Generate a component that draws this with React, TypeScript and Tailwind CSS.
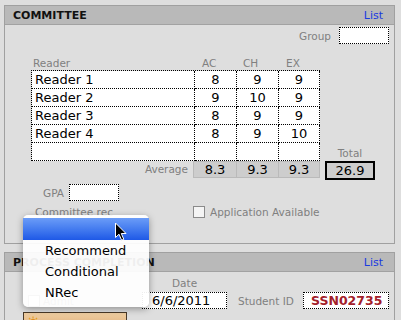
const rows = [
  ["Reader 1", "8", "9", "9"],
  ["Reader 2", "9", "10", "9"],
  ["Reader 3", "8", "9", "9"],
  ["Reader 4", "8", "9", "10"],
  ["", "", "", ""],
];

function Header({ title }: { title: string }) {
  return (
    <div className="h-[19px] bg-[#b9b9b9] border-b border-[#a2a2a2] flex items-center justify-between pl-[8px] pr-[11px]">
      <span className="text-[11px] font-bold text-[#111] leading-none">{title}</span>
      <span className="text-[11px] text-[#1a3be0] leading-none">List</span>
    </div>
  );
}

export default function App() {
  return (
    <div className="relative w-[401px] h-[320px] overflow-hidden bg-[#dedede] pt-[5px] pl-[4px] font-['DejaVu_Sans',Verdana,sans-serif] text-black">
      {/* Panel 1 */}
      <div className="w-[391px] h-[239px] border border-[#a0a0a0]">
        <Header title="COMMITTEE" />
        <div className="pt-[2px]">
          <div className="flex justify-end items-center gap-[8px] pr-[5px]">
            <span className="text-[10.5px] text-[#808080] leading-[14px]">Group</span>
            <div className="w-[50px] h-[17px] bg-white border border-dotted border-black" />
          </div>

          <div className="ml-[26px] mt-[12px] grid grid-cols-[164px_42px_42px_41px] h-[14px] text-[10.5px] leading-[14px] text-[#808080]">
            <span className="pl-[2px]">Reader</span>
            <span className="pl-[7px]">AC</span>
            <span className="pl-[6px]">CH</span>
            <span className="pl-[7px]">EX</span>
          </div>

          <div className="ml-[26px] flex">
            <div className="grid grid-cols-[163px_42px_42px_41px] border-l border-t border-dotted border-black w-[289px]">
              {rows.map((r, i) =>
                r.map((c, j) => (
                  <div
                    key={`${i}-${j}`}
                    className={`h-[18px] bg-white border-r border-b border-dotted border-black text-[13px] leading-[17px] ${
                      j === 0 ? "pl-[3px]" : "text-center"
                    }`}
                  >
                    {c}
                  </div>
                ))
              )}
            </div>
            <div className="ml-[5px] w-[50px] flex items-end justify-center">
              <span className="text-[10.5px] leading-[14px] text-[#808080] pb-[1px]">Total</span>
            </div>
          </div>

          <div className="ml-[26px] flex items-start">
            <div className="w-[162px] h-[17px] text-right pr-[5px] text-[10.5px] leading-[17px] text-[#808080]">Average</div>
            <div className="flex border border-[#bababa] bg-[#cdcdcd] h-[17px]">
              <div className="w-[43px] border-r border-[#bababa] text-center text-[13px] leading-[15px]">8.3</div>
              <div className="w-[42px] border-r border-[#bababa] text-center text-[13px] leading-[15px]">9.3</div>
              <div className="w-[40px] text-center text-[13px] leading-[15px]">9.3</div>
            </div>
            <div className="ml-[5px] w-[50px] h-[19px] border-2 border-black bg-[#cdcdcd] text-center text-[13px] leading-[15px]">26.9</div>
          </div>

          <div className="mt-[4px] pl-[38px] flex items-center gap-[5px]">
            <span className="text-[10.5px] leading-[14px] text-[#808080]">GPA</span>
            <div className="w-[50px] h-[17px] bg-white border border-dotted border-black" />
          </div>

          <div className="mt-[4px] pl-[30px] flex items-center h-[14px]">
            <span className="w-[158px] text-[10.5px] leading-[14px] text-[#808080]">Committee rec</span>
            <div className="w-[12px] h-[12px] border border-[#8a8a8a] bg-[#f4f4f4]" />
            <span className="ml-[5px] text-[10.5px] leading-[14px] text-[#808080]">Application Available</span>
          </div>
        </div>
      </div>

      {/* Panel 2 */}
      <div className="mt-[8px] w-[391px] h-[100px] border border-[#a0a0a0]">
        <Header title="PROCESS COMPLETION" />
        <div className="pt-[4px]">
          <div className="pl-[167px] h-[14px] text-[10.5px] leading-[14px] text-[#808080]">Date</div>
          <div className="mt-[2px] pl-[23px] flex items-center h-[17px] pr-[5px]">
            <div className="w-[114px] flex items-center gap-[3px]">
              <div className="w-[12px] h-[12px] border border-[#8a8a8a] bg-[#f4f4f4]" />
              <span className="text-[10.5px] leading-[14px] text-[#808080]">Admit</span>
            </div>
            <div className="w-[85px] h-[17px] bg-white border border-dotted border-black text-[13px] leading-[15px] pl-[9px]">6/6/2011</div>
            <span className="ml-[11px] text-[10.5px] leading-[14px] text-[#808080]">Student ID</span>
            <div className="ml-auto w-[86px] h-[17px] bg-white border border-dotted border-black text-[12.5px] leading-[15px] font-bold text-[#a3202a] pl-[7px]">SSN02735</div>
          </div>
          <div className="mt-[3px] ml-[18px] w-[104px] h-[22px] border border-[#4a3a28] bg-gradient-to-b from-[#f0cfa2] to-[#d9a46e] flex items-start gap-[6px] pl-[3px] pt-[3px]">
            <svg width="12" height="12" viewBox="0 0 12 12">
              <circle cx="6" cy="6" r="3" fill="#e08a1a" />
              <g stroke="#e3a22a" strokeWidth="1.2">
                <line x1="6" y1="0.5" x2="6" y2="2.5" />
                <line x1="6" y1="9.5" x2="6" y2="11.5" />
                <line x1="0.5" y1="6" x2="2.5" y2="6" />
                <line x1="9.5" y1="6" x2="11.5" y2="6" />
                <line x1="2" y1="2" x2="3.3" y2="3.3" />
                <line x1="8.7" y1="8.7" x2="10" y2="10" />
                <line x1="10" y1="2" x2="8.7" y2="3.3" />
                <line x1="2" y1="10" x2="3.3" y2="8.7" />
              </g>
            </svg>
            <span className="text-[11px] leading-[14px] text-[#5a3a1a] mt-[2px]">Build Letter</span>
          </div>
        </div>
      </div>

      {/* Popup menu */}
      <div className="absolute left-[23px] top-[215px] w-[126px] h-[92px] rounded-[5px] bg-white/[0.93] shadow-[0_2px_7px_rgba(0,0,0,0.35)] pt-[3px] font-['DejaVu_Sans',sans-serif]">
        <div className="h-[22px] bg-gradient-to-b from-[#6b9cf7] to-[#1e58e6]" />
        <div className="h-[21px] pl-[22px] text-[13px] leading-[21px]">Recommend</div>
        <div className="h-[21px] pl-[22px] text-[13px] leading-[21px]">Conditional</div>
        <div className="h-[21px] pl-[22px] text-[13px] leading-[21px]">NRec</div>
      </div>

      {/* Cursor */}
      <svg className="absolute left-[114px] top-[222px]" width="14" height="20" viewBox="0 0 14 20">
        <path d="M1.5 1 L1.5 15.5 L5 12.2 L7.6 18.2 L9.8 17.3 L7.3 11.5 L12 11.5 Z" fill="#000" stroke="#fff" strokeWidth="1" strokeLinejoin="round" />
      </svg>
    </div>
  );
}
